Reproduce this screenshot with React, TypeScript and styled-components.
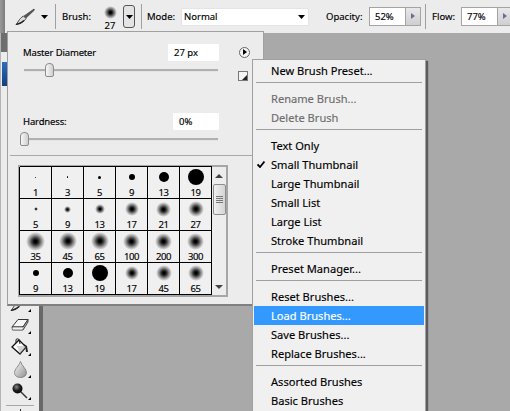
import React from 'react';
import styled, { createGlobalStyle } from 'styled-components';

const GlobalStyle = createGlobalStyle`
  html, body {
    margin: 0;
    padding: 0;
    background: #a9a9a9;
  }
  * {
    box-sizing: border-box;
  }
`;

interface BrushTip {
  label: string;
  size: number;
  soft?: boolean;
}

const brushTips: BrushTip[] = [
  { label: '1', size: 1 },
  { label: '3', size: 1.5 },
  { label: '5', size: 3 },
  { label: '9', size: 6 },
  { label: '13', size: 10 },
  { label: '19', size: 16 },
  { label: '5', size: 4, soft: true },
  { label: '9', size: 7, soft: true },
  { label: '13', size: 10, soft: true },
  { label: '17', size: 14, soft: true },
  { label: '21', size: 15, soft: true },
  { label: '27', size: 16, soft: true },
  { label: '35', size: 19, soft: true },
  { label: '45', size: 18, soft: true },
  { label: '65', size: 18, soft: true },
  { label: '100', size: 17, soft: true },
  { label: '200', size: 17, soft: true },
  { label: '300', size: 17, soft: true },
  { label: '9', size: 6 },
  { label: '13', size: 10 },
  { label: '19', size: 16 },
  { label: '17', size: 14, soft: true },
  { label: '45', size: 16, soft: true },
  { label: '65', size: 16, soft: true },
];

type MenuEntry = { label: string; disabled?: boolean; checked?: boolean; active?: boolean } | 'sep';

const menuEntries: MenuEntry[] = [
  { label: 'New Brush Preset...' },
  'sep',
  { label: 'Rename Brush...', disabled: true },
  { label: 'Delete Brush', disabled: true },
  'sep',
  { label: 'Text Only' },
  { label: 'Small Thumbnail', checked: true },
  { label: 'Large Thumbnail' },
  { label: 'Small List' },
  { label: 'Large List' },
  { label: 'Stroke Thumbnail' },
  'sep',
  { label: 'Preset Manager...' },
  'sep',
  { label: 'Reset Brushes...' },
  { label: 'Load Brushes...', active: true },
  { label: 'Save Brushes...' },
  { label: 'Replace Brushes...' },
  'sep',
  { label: 'Assorted Brushes' },
  { label: 'Basic Brushes' },
];

const CaretIcon = () => (
  <svg width="7" height="4" viewBox="0 0 7 4">
    <path d="M0 0h7L3.5 4z" fill="#000" />
  </svg>
);

const BrushIcon = () => (
  <svg width="20" height="18" viewBox="0 0 20 18">
    <path d="M19 1 L9 8 L11 10 L19.5 2 Z" fill="#555" stroke="#333" strokeWidth="0.6" />
    <path d="M8.5 8 L11 10.5 C9 14 6 15.5 1 16.5 C3 15 3.5 11 8.5 8 Z" fill="#ddd" stroke="#444" strokeWidth="1" />
    <path d="M1 16.5 C4 16 7 14.5 9 12.5" fill="none" stroke="#222" strokeWidth="1.2" />
  </svg>
);

const EraserIcon = () => (
  <svg width="18" height="14" viewBox="0 0 18 14">
    <path d="M1 9 L7 1.5 H17 L12 9 Z" fill="#f6f6f6" stroke="#333" strokeWidth="1" />
    <path d="M1 9 H12 L17 1.5 V4 L12 12 H1.5 Z" fill="#bdbdbd" stroke="#333" strokeWidth="0.9" />
    <path d="M1.5 9.5 H11.5 V11.5 H1.5 Z" fill="#f2f2f2" />
  </svg>
);

const BucketIcon = () => (
  <svg width="18" height="18" viewBox="0 0 18 18">
    <path d="M1 9 L8 2 L15 9 L9 16 Z" fill="#fff" stroke="#111" strokeWidth="1.3" />
    <path d="M5 5 L5 1.5 Q6.5 0 8 1.5 L9 6" fill="none" stroke="#222" strokeWidth="1" />
    <path d="M13 6 L16 8 L17 14 L15 14 L14.5 10 Z" fill="#222" />
    <path d="M9 16 L15 9 L14 8 L6 8 Z" fill="#aaa" opacity="0.5" />
  </svg>
);

const DropIcon = () => (
  <svg width="13" height="17" viewBox="0 0 13 17">
    <defs>
      <linearGradient id="drop" x1="0" y1="0" x2="1" y2="1">
        <stop offset="0" stopColor="#fafafa" />
        <stop offset="1" stopColor="#8e8e8e" />
      </linearGradient>
    </defs>
    <path d="M6.5 0.5 C8 5 12.5 8 12.5 11.5 C12.5 14.5 10 16.5 6.5 16.5 C3 16.5 0.5 14.5 0.5 11.5 C0.5 8 5 5 6.5 0.5 Z" fill="url(#drop)" stroke="#777" strokeWidth="0.8" />
  </svg>
);

const BurnIcon = () => (
  <svg width="16" height="16" viewBox="0 0 16 16">
    <defs>
      <radialGradient id="burn" cx="0.4" cy="0.35" r="0.7">
        <stop offset="0" stopColor="#888" />
        <stop offset="0.5" stopColor="#222" />
        <stop offset="1" stopColor="#000" />
      </radialGradient>
    </defs>
    <line x1="8" y1="8" x2="15" y2="15" stroke="#333" strokeWidth="1.4" />
    <circle cx="5.5" cy="5.5" r="5" fill="url(#burn)" />
  </svg>
);

const App: React.FC = () => {
  return (
    <Page>
      <GlobalStyle />
      <OptionsBar>
        <Grip />
        <ToolPreset>
          <BrushIcon />
          <CaretIcon />
        </ToolPreset>
        <BarDivider />
        <BarLabel $left={6} $width={38}>Brush:</BarLabel>
        <BrushPreview>
          <PreviewDot />
          <PreviewSize>27</PreviewSize>
        </BrushPreview>
        <PickerButton>
          <CaretIcon />
        </PickerButton>
        <BarDivider $left={6} />
        <BarLabel $left={5} $width={29}>Mode:</BarLabel>
        <ModeSelect>
          Normal
          <CaretIcon />
        </ModeSelect>
        <BarLabel $left={17} $width={38}>Opacity:</BarLabel>
        <PercentField $left={5}>
          <PercentValue>52%</PercentValue>
          <Stepper />
        </PercentField>
        <BarDivider $left={4} />
        <BarLabel $left={6} $width={25}>Flow:</BarLabel>
        <PercentField $left={4}>
          <PercentValue>77%</PercentValue>
          <Stepper />
        </PercentField>
      </OptionsBar>

      <Workspace>
        <ToolStrip>
          <StripHeader />
          <SwatchEdge />
          <ToolSlot><BrushIcon /></ToolSlot>
          <ToolSlot><EraserIcon /></ToolSlot>
          <ToolSlot><BucketIcon /></ToolSlot>
          <ToolSlot><DropIcon /></ToolSlot>
          <ToolSlot><BurnIcon /></ToolSlot>
          <StripRule />
          <NextToolTick />
        </ToolStrip>
      </Workspace>

      <BrushPanel>
        <DiameterRow>
          <PanelLabel>Master Diameter</PanelLabel>
          <ValueBox $width={51} $right={20}>27 px</ValueBox>
          <FlyoutButton />
        </DiameterRow>
        <SliderRow>
          <SliderTrack>
            <SliderThumb $at={21} />
          </SliderTrack>
          <ResetIcon />
        </SliderRow>
        <HardnessRow>
          <PanelLabel>Hardness:</PanelLabel>
          <ValueBox $width={46} $right={42}>0%</ValueBox>
        </HardnessRow>
        <SliderRow>
          <SliderTrack>
            <SliderThumb $at={-4} />
          </SliderTrack>
        </SliderRow>
        <PanelRule />
        <PresetFrame>
          <PresetGrid>
            {brushTips.map((tip, i) => (
              <PresetCell key={i}>
                <TipSlot>
                  <Tip $size={tip.size} $soft={tip.soft} />
                </TipSlot>
                <TipLabel>{tip.label}</TipLabel>
              </PresetCell>
            ))}
          </PresetGrid>
          <ScrollBar>
            <ScrollArrow $up />
            <ScrollThumb>
              <ThumbLine />
              <ThumbLine />
              <ThumbLine />
              <ThumbLine />
            </ScrollThumb>
            <ScrollArrow />
          </ScrollBar>
        </PresetFrame>
      </BrushPanel>

      <BrushMenu>
        {menuEntries.map((entry, i) =>
          entry === 'sep' ? (
            <MenuRule key={i} />
          ) : (
            <MenuItem key={i} $disabled={entry.disabled} $active={entry.active}>
              {entry.checked && (
                <CheckMark width="8" height="7" viewBox="0 0 8 7">
                  <path d="M0.5 3.5 L3 6 L7.5 0.5" fill="none" stroke="#000" strokeWidth="1.8" />
                </CheckMark>
              )}
              {entry.label}
            </MenuItem>
          ),
        )}
      </BrushMenu>
    </Page>
  );
};

const Page = styled.div`
  position: relative;
  width: 510px;
  height: 411px;
  overflow: hidden;
  display: flex;
  flex-direction: column;
  background: #a9a9a9;
  color: #000;
  font-family: 'Noto Sans', 'Liberation Sans', sans-serif;
  font-size: 9.5px;
  -webkit-text-stroke: 0.15px currentColor;
`;

const OptionsBar = styled.div`
  height: 33px;
  flex: none;
  display: flex;
  align-items: center;
  background: #ececec;
  & > * {
    flex: none;
  }
`;

const Grip = styled.div`
  width: 5px;
  height: 100%;
  background: linear-gradient(90deg, #9a9a9a, #7c7c7c);
`;

const ToolPreset = styled.div`
  width: 50px;
  padding-left: 10px;
  display: flex;
  align-items: center;
  gap: 6px;
`;

const BarDivider = styled.div<{ $left?: number }>`
  width: 1px;
  height: 25px;
  margin-left: ${(p) => p.$left ?? 0}px;
  background: #a0a0a0;
`;

const BarLabel = styled.span<{ $left: number; $width: number }>`
  width: ${(p) => p.$width}px;
  margin-left: ${(p) => p.$left}px;
  white-space: nowrap;
`;

const BrushPreview = styled.div`
  width: 20px;
  height: 27px;
  margin-top: 1px;
  display: flex;
  flex-direction: column;
  align-items: center;
  justify-content: space-between;
`;

const PreviewDot = styled.div`
  width: 13px;
  height: 13px;
  border-radius: 50%;
  margin-top: 2px;
  background: radial-gradient(circle closest-side, #000 15%, #333 35%, #999 70%, transparent 100%);
`;

const PreviewSize = styled.span`
  line-height: 11px;
`;

const PickerButton = styled.div`
  width: 12px;
  height: 23px;
  margin-left: 3px;
  display: flex;
  align-items: center;
  justify-content: center;
  background: #e4e4e4;
  border: 1px solid #555;
  border-radius: 3px;
`;

const ModeSelect = styled.div`
  width: 128px;
  height: 18px;
  margin-left: 5px;
  padding: 0 4px 0 3px;
  display: flex;
  align-items: center;
  justify-content: space-between;
  background: #fff;
  border-radius: 1px;
  box-shadow: inset 0 0 0 1px #e4e4e4;
`;

const PercentField = styled.div<{ $left: number }>`
  width: 52px;
  height: 19px;
  margin-left: ${(p) => p.$left}px;
  display: flex;
  background: #fff;
  border: 1px solid #a4a4a4;
`;

const PercentValue = styled.span`
  flex: 1;
  padding-left: 5px;
  line-height: 17px;
`;

const Stepper = styled.div`
  width: 15px;
  flex: none;
  position: relative;
  background: linear-gradient(180deg, #e8e8e8, #cfcfcf);
  border-left: 1px solid #a4a4a4;
  &::after {
    content: '';
    position: absolute;
    left: 5px;
    top: 5px;
    border-left: 4px solid #6a6f8c;
    border-top: 3px solid transparent;
    border-bottom: 3px solid transparent;
  }
`;

const Workspace = styled.div`
  flex: 1;
  display: flex;
  min-height: 0;
`;

const ToolStrip = styled.div`
  width: 43px;
  flex: none;
  display: flex;
  flex-direction: column;
  align-items: center;
  background: #ececec;
  border-right: 4px solid #686868;
  border-left: 1px solid #b4b4b4;
`;

const StripHeader = styled.div`
  align-self: stretch;
  height: 19px;
  flex: none;
  background: #6e6e6e;
`;

const SwatchEdge = styled.div`
  align-self: flex-start;
  width: 5px;
  height: 24px;
  flex: none;
  margin: 10px 0 auto 1px;
  background: linear-gradient(180deg, #2a6fc4, #123f7d);
`;

const ToolSlot = styled.div`
  position: relative;
  width: 30px;
  height: 22px;
  flex: none;
  display: flex;
  align-items: center;
  justify-content: center;
  &::after {
    content: '';
    position: absolute;
    right: 4px;
    bottom: 2px;
    border-bottom: 3px solid #000;
    border-left: 3px solid transparent;
  }
`;

const StripRule = styled.div`
  width: 28px;
  height: 1px;
  flex: none;
  margin-top: 3px;
  background: #a8a8a8;
`;

const NextToolTick = styled.div`
  width: 1px;
  height: 2px;
  flex: none;
  margin-top: 3px;
  background: #333;
`;

const BrushPanel = styled.div`
  position: absolute;
  left: 7px;
  top: 31px;
  width: 257px;
  height: 275px;
  padding: 0 2px;
  background: #ececec;
  border: 1px solid #a0a0a0;
  border-bottom: 2px solid #808080;
`;

const DiameterRow = styled.div`
  height: 18px;
  margin: 11px 0 0;
  padding-left: 13px;
  display: flex;
  align-items: center;
`;

const HardnessRow = styled(DiameterRow)`
  margin-top: 35px;
`;

const PanelLabel = styled.span`
  flex: 1;
  letter-spacing: -0.15px;
`;

const ValueBox = styled.div<{ $width: number; $right: number }>`
  width: ${(p) => p.$width}px;
  height: 17px;
  margin-right: ${(p) => p.$right}px;
  padding-left: 6px;
  line-height: 17px;
  background: #fff;
  border-radius: 1px;
`;

const FlyoutButton = styled.div`
  position: relative;
  width: 11px;
  height: 11px;
  margin-right: 11px;
  border-radius: 50%;
  background: #f4f4f4;
  border: 1px solid #666;
  &::after {
    content: '';
    position: absolute;
    left: 3px;
    top: 1px;
    border-left: 4px solid #000;
    border-top: 3.5px solid transparent;
    border-bottom: 3.5px solid transparent;
  }
`;

const SliderRow = styled.div`
  height: 14px;
  margin-top: 2px;
  padding-left: 14px;
  display: flex;
  align-items: center;
`;

const SliderTrack = styled.div`
  position: relative;
  width: 194px;
  height: 3px;
  background: #b0b0b0;
  border-bottom: 1px solid #e4e4e4;
`;

const SliderThumb = styled.div<{ $at: number }>`
  position: absolute;
  left: ${(p) => p.$at}px;
  top: -6px;
  width: 9px;
  height: 14px;
  background: linear-gradient(90deg, #f6f6f6, #cfcfcf);
  border: 1px solid #8c8c8c;
  border-radius: 4px 4px 2px 2px;
`;

const ResetIcon = styled.div`
  position: relative;
  width: 10px;
  height: 10px;
  margin: 12px 0 0 20px;
  background: #f4f4f4;
  border: 1px solid #777;
  &::after {
    content: '';
    position: absolute;
    right: 0;
    bottom: 0;
    border-bottom: 5px solid #222;
    border-left: 5px solid transparent;
  }
`;

const PanelRule = styled.div`
  height: 1px;
  margin-top: 9px;
  background: #a8a8a8;
`;

const PresetFrame = styled.div`
  width: 210px;
  height: 132px;
  margin: 9px 0 0 8px;
  display: flex;
  background: #f0f0f0;
  border: 2px solid #a6a6a6;
`;

const PresetGrid = styled.div`
  width: 192px;
  display: grid;
  grid-template-columns: repeat(6, 32px);
  grid-auto-rows: 32px;
`;

const PresetCell = styled.div`
  display: flex;
  flex-direction: column;
  align-items: center;
  border-right: 1px solid #000;
  border-bottom: 1px solid #000;
  &:nth-child(-n + 6) {
    box-shadow: 0 -1px 0 #000;
  }
  &:nth-child(6n + 1) {
    box-shadow: -1px 0 0 #000;
  }
  &:first-child {
    box-shadow: 0 -1px 0 #000, -1px 0 0 #000;
  }
`;

const TipSlot = styled.div`
  height: 20px;
  flex: none;
  display: flex;
  align-items: center;
  justify-content: center;
`;

const Tip = styled.div<{ $size: number; $soft?: boolean }>`
  width: ${(p) => p.$size}px;
  height: ${(p) => p.$size}px;
  flex: none;
  border-radius: 50%;
  background: ${(p) =>
    p.$soft
      ? 'radial-gradient(circle closest-side, #000 14%, #3c3c3c 38%, #9c9c9c 68%, transparent 100%)'
      : '#000'};
`;

const TipLabel = styled.span`
  font-size: 9.5px;
  letter-spacing: -0.4px;
  line-height: 11px;
`;

const ScrollBar = styled.div`
  flex: 1;
  display: flex;
  flex-direction: column;
  align-items: center;
  justify-content: space-between;
  padding: 7px 0 6px;
  background: #ededed;
`;

const ScrollArrow = styled.div<{ $up?: boolean }>`
  width: 0;
  height: 0;
  border-left: 4px solid transparent;
  border-right: 4px solid transparent;
  ${(p) => (p.$up ? 'border-bottom: 4px solid #444;' : 'border-top: 4px solid #444;')}
`;

const ScrollThumb = styled.div`
  width: 13px;
  height: 31px;
  margin: 6px 0 auto;
  display: flex;
  flex-direction: column;
  align-items: center;
  justify-content: center;
  gap: 1px;
  background: linear-gradient(90deg, #f0f0f0, #d4d4d4);
  border: 1px solid #8e8e8e;
  border-radius: 2px;
`;

const ThumbLine = styled.div`
  width: 7px;
  height: 1px;
  background: #777;
`;

const BrushMenu = styled.div`
  position: absolute;
  left: 252px;
  top: 59px;
  width: 174px;
  height: 360px;
  padding-top: 1px;
  font-size: 11.1px;
  background: #f0f0f0;
  border: 1px solid #a0a0a0;
  box-shadow: 2px 2px 1px #5c5c5c;
`;

const MenuItem = styled.div<{ $disabled?: boolean; $active?: boolean }>`
  position: relative;
  height: 19px;
  margin: 0 1px;
  padding-left: 17px;
  line-height: 19px;
  color: ${(p) => (p.$active ? '#fff' : p.$disabled ? '#6d6d6d' : '#000')};
  background: ${(p) => (p.$active ? '#3399ff' : 'transparent')};
`;

const CheckMark = styled.svg`
  position: absolute;
  left: 3px;
  top: 6px;
`;

const MenuRule = styled.div`
  height: 1px;
  margin: 2px 3px 6px;
  background: #a0a0a0;
`;

export default App;
